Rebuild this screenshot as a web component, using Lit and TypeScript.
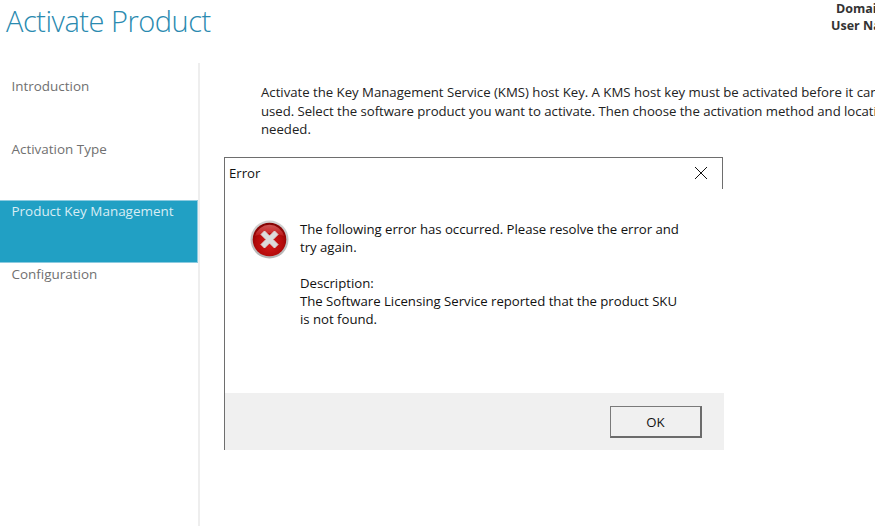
import { LitElement, html, css } from "lit";
import { customElement } from "lit/decorators.js";

@customElement("app-root")
export class AppRoot extends LitElement {
  static styles = css`
    :host {
      display: block;
      position: relative;
      width: 875px;
      height: 526px;
      overflow: hidden;
      background: #fff;
      font-family: "Open Sans", "Noto Sans", sans-serif;
      color: #222;
    }
    .header {
      display: flex;
      height: 63px;
      box-sizing: border-box;
    }
    .title {
      flex: none;
      width: 210px;
      margin: 0;
      padding: 2px 0 0 6px;
      font-size: 29px;
      line-height: 38px;
      font-weight: 300;
      color: #2a8ab0;
      letter-spacing: -0.48px;
      white-space: nowrap;
    }
    .info {
      flex: none;
      margin-left: 615px;
      padding-top: 1px;
      font-size: 12.5px;
      line-height: 16.5px;
      font-weight: 700;
      color: #333;
      white-space: nowrap;
    }
    .info .first {
      padding-left: 5px;
    }
    .body {
      display: flex;
      height: 463px;
    }
    .nav {
      flex: none;
      width: 198px;
      border-right: 2px solid #eeeeee;
      padding-top: 12px;
    }
    .nav-item {
      height: 62.5px;
      box-sizing: border-box;
      padding: 2px 0 0 11.5px;
      font-size: 13.45px;
      line-height: 18px;
      color: #707070;
    }
    .nav-item.active {
      background: #21a0c4;
      color: #d8edf4;
      border-top: 1px solid #8ccbe0;
      border-bottom: 1px solid #8ccbe0;
      border-right: 1px solid #8ccbe0;
      padding-top: 1px;
    }
    .content {
      flex: none;
      width: 640px;
      padding: 20px 0 0 61px;
      font-size: 13.2px;
      line-height: 18.5px;
      letter-spacing: -0.01px;
      color: #222;
    }
    .content p {
      margin: 0;
    }
    .content span {
      display: block;
      white-space: nowrap;
    }
    .content span.tight {
      letter-spacing: -0.04px;
    }
    .dialog {
      position: absolute;
      left: 224px;
      top: 157px;
      width: 500px;
      height: 293px;
      display: flex;
      flex-direction: column;
      background: #fff;
      font-size: 13.2px;
      color: #111;
    }
    .edge-left {
      position: absolute;
      left: 0;
      top: 0;
      bottom: 0;
      width: 1px;
      background: #6e6e6e;
    }
    .edge-top {
      position: absolute;
      left: 0;
      top: 0;
      width: 499px;
      height: 1px;
      background: #6e6e6e;
    }
    .edge-right {
      position: absolute;
      left: 498px;
      top: 0;
      width: 1px;
      height: 32px;
      background: #6e6e6e;
    }
    .titlebar {
      flex: none;
      height: 32px;
      display: flex;
      align-items: center;
      justify-content: space-between;
      padding: 0 16px 0 5px;
      line-height: 18px;
    }
    .close {
      display: block;
      width: 14px;
      height: 14px;
    }
    .main {
      flex: 1;
      display: flex;
      align-items: flex-start;
      padding: 30px 0 0 26px;
      gap: 11px;
    }
    .icon {
      flex: none;
      width: 39px;
      height: 39px;
      margin-top: 1px;
    }
    .msg {
      line-height: 18px;
      width: 400px;
      padding-top: 1px;
      letter-spacing: -0.02px;
    }
    .msg div {
      white-space: nowrap;
    }
    .gap {
      height: 18px;
    }
    .footer {
      flex: none;
      height: 57px;
      background: #f0f0f0;
      display: flex;
      justify-content: flex-end;
      align-items: flex-start;
      padding: 13px 22px 0 0;
      box-sizing: border-box;
    }
    .ok {
      width: 92px;
      height: 32px;
      box-sizing: border-box;
      padding: 0;
      background: #f0f0f0;
      border: 1px solid #7a7a7a;
      border-right: 2px solid #6b6b6b;
      border-bottom: 2px solid #6b6b6b;
      font: inherit;
      color: #111;
    }
  `;

  render() {
    const items = ["Introduction", "Activation Type", "Product Key Management", "Configuration"];
    return html`
      <header class="header">
        <h1 class="title">Activate Product</h1>
        <div class="info">
          <div class="first">Domain</div>
          <div>User Name</div>
        </div>
      </header>
      <div class="body">
        <nav class="nav">
          ${items.map(
            (t, i) => html`<div class="nav-item ${i === 2 ? "active" : ""}">${t}</div>`
          )}
        </nav>
        <div class="content">
          <p>
            <span>Activate the Key Management Service (KMS) host Key. A KMS host key must be activated before it can be</span>
            <span class="tight">used. Select the software product you want to activate. Then choose the activation method and location if</span>
            <span>needed.</span>
          </p>
        </div>
      </div>
      <div class="dialog">
        <div class="edge-left"></div>
        <div class="edge-top"></div>
        <div class="edge-right"></div>
        <div class="titlebar">
          <span>Error</span>
          <svg class="close" viewBox="0 0 14 14">
            <path d="M1 1 L13 13 M13 1 L1 13" stroke="#111" stroke-width="1" fill="none" />
          </svg>
        </div>
        <div class="main">
          <svg class="icon" viewBox="0 0 39 39">
            <defs>
              <radialGradient id="red" cx="50%" cy="62%" r="58%">
                <stop offset="0%" stop-color="#d81c1c" />
                <stop offset="70%" stop-color="#b30a0a" />
                <stop offset="100%" stop-color="#860404" />
              </radialGradient>
              <linearGradient id="ring" x1="0" y1="0" x2="0" y2="1">
                <stop offset="0%" stop-color="#d4d4d4" />
                <stop offset="100%" stop-color="#b4b4b4" />
              </linearGradient>
              <linearGradient id="shine" x1="0" y1="0" x2="0" y2="1">
                <stop offset="0%" stop-color="#ec8080" />
                <stop offset="100%" stop-color="#c82020" />
              </linearGradient>
            </defs>
            <circle cx="19.5" cy="19.5" r="19" fill="url(#ring)" />
            <circle cx="19.5" cy="19.5" r="16.8" fill="url(#red)" />
            <path d="M5 16 A15 15 0 0 1 34 16 Q19.5 10 5 16 Z" fill="url(#shine)" opacity="0.65" />
            <path
              d="M14.5 11 L19.5 16 L24.5 11 L28 14.5 L23 19.5 L28 24.5 L24.5 28 L19.5 23 L14.5 28 L11 24.5 L16 19.5 L11 14.5 Z"
              fill="#dcdcdc"
              stroke="#dcdcdc"
              stroke-width="1"
              stroke-linejoin="round"
            />
          </svg>
          <div class="msg">
            <div>The following error has occurred. Please resolve the error and</div>
            <div>try again.</div>
            <div class="gap"></div>
            <div>Description:</div>
            <div>The Software Licensing Service reported that the product SKU</div>
            <div>is not found.</div>
          </div>
        </div>
        <div class="footer">
          <button class="ok">OK</button>
        </div>
      </div>
    `;
  }
}
